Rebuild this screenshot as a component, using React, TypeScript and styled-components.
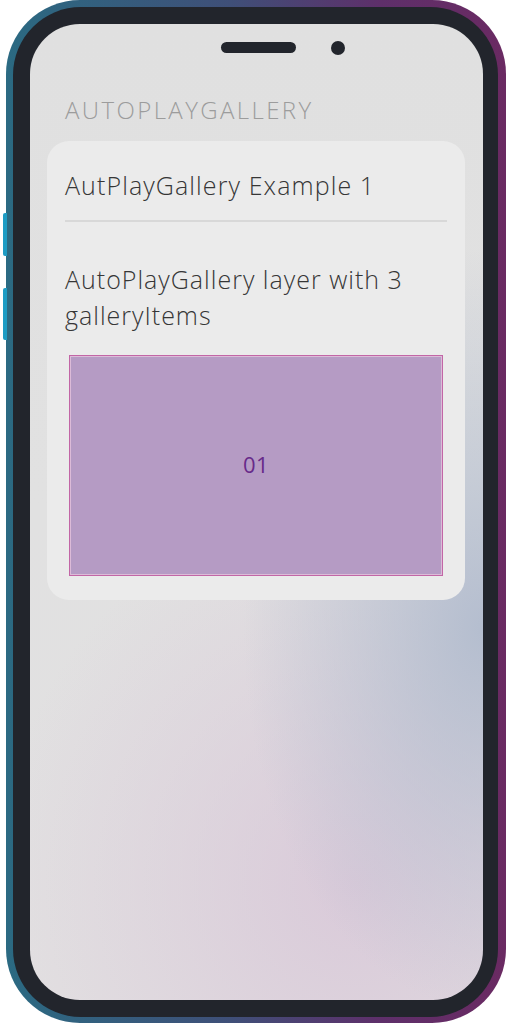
import styled, { createGlobalStyle } from "styled-components";

const GlobalStyle = createGlobalStyle`
  html, body {
    margin: 0;
    padding: 0;
    background: #ffffff;
  }
  * {
    box-sizing: border-box;
  }
`;

const Page = styled.div`
  width: 512px;
  height: 1024px;
  padding: 0 6px 1px 6px;
  font-family: "Open Sans", Lato, sans-serif;
`;

const Phone = styled.div`
  position: relative;
  width: 500px;
  height: 1023px;
  border-radius: 74px;
  padding: 7px 8px 6px 7px;
  background: linear-gradient(90deg, #2b6a82 0%, #3f4f78 45%, #5e2f6a 75%, #6a2a62 100%);
`;

interface SideButtonProps {
  top: number;
  height: number;
}

const SideButton = styled.div<SideButtonProps>`
  position: absolute;
  left: -3px;
  top: ${(p) => p.top}px;
  width: 4px;
  height: ${(p) => p.height}px;
  border-radius: 2px 0 0 2px;
  background: #1d9cc4;
`;

const Bezel = styled.div`
  height: 100%;
  border-radius: 68px;
  background: #22252c;
  padding: 17px 15px 17px 17px;
`;

const Screen = styled.div`
  position: relative;
  height: 100%;
  border-radius: 50px;
  overflow: hidden;
  background:
    radial-gradient(ellipse 240px 380px at 100% 62%, rgba(178, 188, 206, 0.95), rgba(178, 188, 206, 0) 100%),
    radial-gradient(ellipse 360px 380px at 72% 88%, rgba(216, 198, 216, 0.85), rgba(216, 198, 216, 0) 100%),
    linear-gradient(180deg, #e0e0e0 0%, #e1e1e1 50%, #e2e0e1 100%);
  padding: 18px 18px 0 17px;
`;

const Notch = styled.div`
  display: flex;
  align-items: center;
  justify-content: center;
  gap: 35px;
  height: 11px;
  padding-left: 54px;
`;

const Speaker = styled.div`
  width: 75px;
  height: 11px;
  border-radius: 6px;
  background: #22252c;
`;

const Camera = styled.div`
  width: 14px;
  height: 14px;
  border-radius: 50%;
  background: #22252c;
`;

const Title = styled.h1`
  margin: 42px 0 0 18px;
  font-size: 24px;
  font-weight: 300;
  line-height: 30px;
  letter-spacing: 2.4px;
  color: #9c9c9c;
`;

const Card = styled.div`
  margin-top: 16px;
  background: #ebebeb;
  border-radius: 22px;
  padding: 24px 18px 24px 18px;
`;

const CardHeading = styled.div`
  font-size: 25px;
  font-weight: 300;
  line-height: 40px;
  letter-spacing: 1.1px;
  color: #363636;
`;

const Divider = styled.hr`
  margin: 15px 0 0 0;
  border: none;
  height: 2px;
  background: #d8d8d8;
`;

const Description = styled.p`
  margin: 39px 0 0 0;
  font-size: 25px;
  font-weight: 300;
  line-height: 36px;
  letter-spacing: 1px;
  color: #363636;
`;

const Gallery = styled.div`
  margin: 22px 4px 0 4px;
  height: 221px;
  border: 1px solid #c266a6;
  box-shadow: inset 0 0 0 1px #dcbbd8;
  background: #b59bc4;
  display: flex;
  align-items: center;
  justify-content: center;
`;

const GalleryLabel = styled.span`
  margin-bottom: 3px;
  font-size: 22px;
  font-weight: 400;
  letter-spacing: 0.5px;
  color: #672a8a;
`;

export default function App() {
  return (
    <Page>
      <GlobalStyle />
      <Phone>
        <SideButton top={213} height={43} />
        <SideButton top={288} height={52} />
        <Bezel>
          <Screen>
            <Notch>
              <Speaker />
              <Camera />
            </Notch>
            <Title>AUTOPLAYGALLERY</Title>
            <Card>
              <CardHeading>AutPlayGallery Example 1</CardHeading>
              <Divider />
              <Description>
                AutoPlayGallery layer with 3
                <br />
                galleryItems
              </Description>
              <Gallery>
                <GalleryLabel>01</GalleryLabel>
              </Gallery>
            </Card>
          </Screen>
        </Bezel>
      </Phone>
    </Page>
  );
}
